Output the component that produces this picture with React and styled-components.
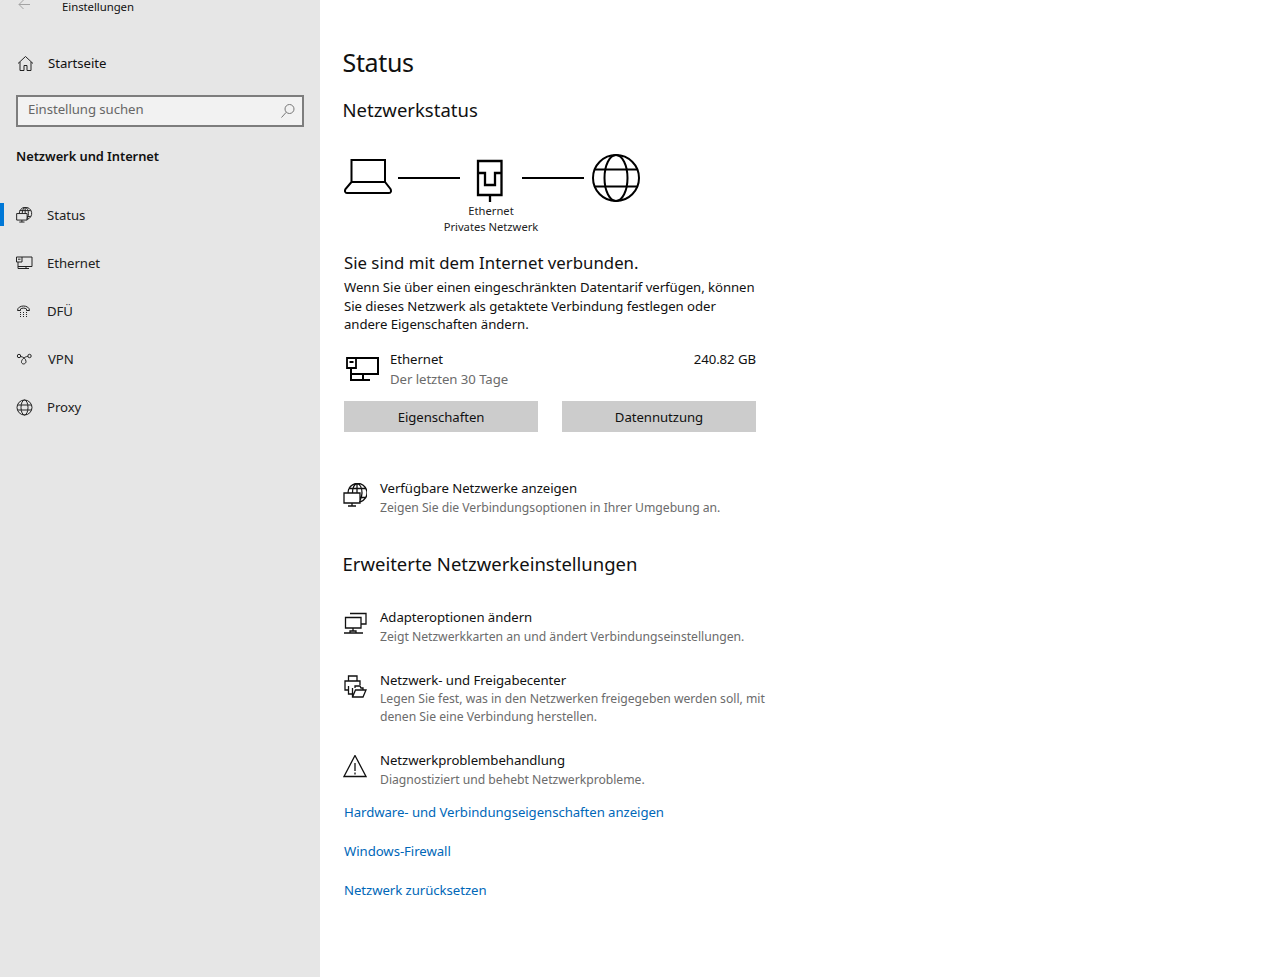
import React from "react";
import styled, { createGlobalStyle } from "styled-components";

const Global = createGlobalStyle`
  html, body { margin: 0; padding: 0; background: #fff; }
  body { font-family: "Noto Sans", "Open Sans", "Liberation Sans", sans-serif; color: #000; font-size: 13.2px; letter-spacing: -0.06px; }
  * { box-sizing: border-box; }
`;

const Page = styled.div`
  display: flex;
  width: 1288px;
  height: 977px;
  overflow: hidden;
`;
const Sidebar = styled.aside`
  width: 320px;
  flex: none;
  background: #e6e6e6;
  display: flex;
  flex-direction: column;
`;
const TitleBar = styled.div`
  height: 13px;
  display: flex;
  align-items: center;
  padding-left: 18px;
  font-size: 11.4px;
  line-height: 13px;
  color: #111;
  svg { margin-right: 32px; margin-top: -5px; }
`;
const HomeRow = styled.div`
  margin-top: 38px;
  height: 24px;
  display: flex;
  align-items: center;
  padding-left: 17px;
  gap: 14px;
  color: #111;
`;
const SearchBox = styled.div`
  margin: 20px 16px 0;
  height: 32px;
  border: 2px solid #7d7d7d;
  background: #f2f2f2;
  display: flex;
  align-items: center;
  justify-content: space-between;
  padding: 0 6px 4px 10px;
  color: #666;
  svg { margin-top: 4px; }
`;
const SectionTitle = styled.div`
  margin: 18px 0 0 16px;
  height: 22px;
  line-height: 22px;
  font-size: 12.9px;
  font-weight: 600;
  color: #111;
`;
const Nav = styled.nav`
  margin-top: 24px;
  display: flex;
  flex-direction: column;
`;
const NavItem = styled.div`
  position: relative;
  height: 48px;
  display: flex;
  align-items: center;
  padding-left: 16px;
  gap: 14px;
  color: #222;
  &::before {
    content: "";
    display: ${(p) => (p.$active ? "block" : "none")};
    position: absolute;
    left: 0;
    top: 12px;
    width: 4px;
    height: 23px;
    background: #0078d7;
  }
`;
const NavIcon = styled.svg`
  width: 17px;
  height: 17px;
  flex: none;
  fill: none;
  stroke: #222;
  stroke-width: 1;
`;
const StatusIcon = styled(NavIcon)`
  stroke-width: 1.5;
`;
const Main = styled.main`
  flex: 1;
  padding: 0 0 0 23px;
  display: flex;
  flex-direction: column;
  align-items: flex-start;
`;
const PageTitle = styled.h1`
  margin: 43px 0 0 -0.5px;
  height: 38px;
  line-height: 38px;
  font-size: 25px;
  letter-spacing: -0.35px;
  font-weight: 400;
  color: #111;
`;
const H2 = styled.h2`
  margin: ${(p) => p.$top}px 0 0 -0.5px;
  height: 28px;
  line-height: 28px;
  font-size: 18.5px;
  letter-spacing: 0;
  font-weight: 400;
  color: #111;
`;
const Diagram = styled.div`
  margin: 29px 0 0 1px;
  width: 298px;
  display: flex;
  flex-direction: column;
`;
const DiagramArt = styled.svg`
  width: 298px;
  height: 50px;
  display: block;
  fill: none;
  stroke: #000;
  stroke-width: 2;
`;
const DiagramCaption = styled.div`
  margin-left: 95px;
  width: 104px;
  text-align: center;
  font-size: 11.2px;
  letter-spacing: 0;
  line-height: 16px;
  color: #222;
`;
const Content = styled.div`
  margin-left: 1px;
  width: 424px;
`;
const Connected = styled.div`
  margin-top: 16px;
  font-size: 16.8px;
  letter-spacing: 0;
  line-height: 24px;
  color: #111;
`;
const Para = styled.p`
  margin: 3px 0 0;
  line-height: 18.5px;
  color: #111;
  width: 414px;
`;
const NetRow = styled.div`
  margin-top: 15px;
  display: flex;
  width: 412px;
  align-items: flex-start;
`;
const NetIcon = styled.svg`
  width: 35px;
  height: 30px;
  flex: none;
  margin-top: 2px;
  fill: none;
  stroke: #000;
  stroke-width: 2;
`;
const NetText = styled.div`
  margin-left: 11px;
  flex: ${(p) => (p.$fixed ? "none" : "1")};
  line-height: 20px;
  color: #111;
`;
const Muted = styled.div`
  color: #6b6b6b;
`;
const Buttons = styled.div`
  margin-top: 12px;
  display: flex;
  gap: 24px;
`;
const Button = styled.div`
  width: 194px;
  height: 31px;
  padding-top: 1px;
  background: #cccccc;
  display: flex;
  align-items: center;
  justify-content: center;
  color: #111;
`;
const LinkRow = styled.div`
  margin-top: ${(p) => p.$top}px;
  display: flex;
  align-items: flex-start;
  gap: 13px;
  width: 430px;
`;
const RowIcon = styled.svg`
  width: 24px;
  height: 26px;
  flex: none;
  fill: none;
  stroke: #111;
  stroke-width: 1.3;
  margin-top: 4px;
`;
const RowText = styled.div`
  line-height: 18px;
  color: #111;
`;
const Sub = styled.div`
  margin-top: ${(p) => p.$gap ?? 2}px;
  font-size: 12.2px;
  letter-spacing: -0.02px;
  line-height: 18px;
  color: #6b6b6b;
`;
const Blue = styled.a`
  display: block;
  margin: ${(p) => p.$top}px 0 0 1px;
  line-height: 20px;
  color: #0067b8;
`;

const monitorGlobe = (
  <path d="M5 10A9.500 9.500 0 1 1 17 19M9.500 10C9.500 4 12 1 14 .5C17 1 19 5 19 10C19 14 17.500 17 16.500 19M5.500 5.500H22.500M17 14.500H22.500M14 .5V10M1 10H17V20H1ZM9 20V23M5 23H13" />
);

export default function App() {
  return (
    <Page>
      <Global />
      <Sidebar>
        <TitleBar>
          <svg width="12" height="11" viewBox="0 0 12 11" fill="none" stroke="#a3a3a3" strokeWidth="1">
            <path d="M12 5.500H1M5.500 1L1 5.500L5.500 10" />
          </svg>
          Einstellungen
        </TitleBar>
        <HomeRow>
          <NavIcon viewBox="0 0 17 17">
            <path d="M1 8.500L8.500 1.500L16 8.500M3 7v8.500h4v-5h3v5h4V7" />
          </NavIcon>
          Startseite
        </HomeRow>
        <SearchBox>
          Einstellung suchen
          <svg width="16" height="16" viewBox="0 0 16 16" fill="none" stroke="#777" strokeWidth="1">
            <circle cx="9.500" cy="6" r="4.500" />
            <path d="M6.200 9.300L1.500 14.500" />
          </svg>
        </SearchBox>
        <SectionTitle>Netzwerk und Internet</SectionTitle>
        <Nav>
          <NavItem $active>
            <StatusIcon viewBox="0 0 26 26">{monitorGlobe}</StatusIcon>
            Status
          </NavItem>
          <NavItem>
            <NavIcon viewBox="0 0 17 17">
              <path d="M6 2H16V11.500H2M7 13.500H13M10 11.500V13.500M2 7V13.500H7" />
              <path d="M.5 2H6V7H.5ZM2 4.200H4.500" />
            </NavIcon>
            Ethernet
          </NavItem>
          <NavItem>
            <NavIcon viewBox="0 0 17 17">
              <path d="M1.500 7.500C1.500 1.500 13.500 1.500 13.500 7.500H10.500V6C9 4.800 6 4.800 4.500 6V7.500Z" />
              <path d="M4 9.500h1M7 9.500h1M10 9.500h1M4 11.500h1M7 11.500h1M10 11.500h1M4 13.500h1M7 13.500h1M10 13.500h1" />
            </NavIcon>
            DFÜ
          </NavItem>
          <NavItem>
            <NavIcon viewBox="0 0 17 17" style={{ marginRight: 1 }}>
              <circle cx="3" cy="5" r="1.700" />
              <circle cx="13.500" cy="5" r="1.700" />
              <path d="M4.700 5.500C7.500 6 10 8 10 10.500C10 13 6.500 14 5.500 11.500C5 9 8.500 5.500 11.800 5.500" />
            </NavIcon>
            VPN
          </NavItem>
          <NavItem>
            <NavIcon viewBox="0 0 17 17">
              <circle cx="8.500" cy="8.500" r="7.500" />
              <ellipse cx="8.500" cy="8.500" rx="3.500" ry="7.500" />
              <path d="M1.500 6h14M1.500 11h14" />
            </NavIcon>
            Proxy
          </NavItem>
        </Nav>
      </Sidebar>
      <Main>
        <PageTitle>Status</PageTitle>
        <H2 $top={15}>Netzwerkstatus</H2>
        <Diagram>
          <DiagramArt viewBox="0 0 298 50">
            <path d="M7.500 29V7H41V29M7.500 29L1.500 36C.5 38 1 40 3 40H45C47 40 47.500 38 46.500 36L41 29Z" />
            <path d="M54 25h62" />
            <path d="M134 8H157.500V42H134ZM146 42v7M134 20H141V32H151V20H157.500" strokeWidth="2.300" />
            <path d="M178 25h62" />
            <circle cx="272" cy="25" r="23" />
            <ellipse cx="272" cy="25" rx="11.500" ry="23" />
            <path d="M250 16.500h44M250 33.500h44" />
          </DiagramArt>
          <DiagramCaption>
            Ethernet
            <br />
            Privates Netzwerk
          </DiagramCaption>
        </Diagram>
        <Content>
          <Connected>Sie sind mit dem Internet verbunden.</Connected>
          <Para>
            Wenn Sie über einen eingeschränkten Datentarif verfügen, können
            Sie dieses Netzwerk als getaktete Verbindung festlegen oder
            andere Eigenschaften ändern.
          </Para>
          <NetRow>
            <NetIcon viewBox="0 0 35 30">
              <path d="M12 7H34V23H7M11 29H26M19 23V29M7 17V29H11" />
              <path d="M3 7H12V17H3ZM5.500 11H9.500" strokeWidth="1.800" />
            </NetIcon>
            <NetText>
              Ethernet
              <Muted>Der letzten 30 Tage</Muted>
            </NetText>
            <NetText $fixed>240.82 GB</NetText>
          </NetRow>
          <Buttons>
            <Button>Eigenschaften</Button>
            <Button>Datennutzung</Button>
          </Buttons>
        </Content>
        <LinkRow $top={47}>
          <RowIcon viewBox="0 0 24 26">{monitorGlobe}</RowIcon>
          <RowText>
            Verfügbare Netzwerke anzeigen
            <Sub>Zeigen Sie die Verbindungsoptionen in Ihrer Umgebung an.</Sub>
          </RowText>
        </LinkRow>
        <H2 $top={33}>Erweiterte Netzwerkeinstellungen</H2>
        <LinkRow $top={30}>
          <RowIcon viewBox="0 0 24 26">
            <path d="M7 1.500H23V12H18M2.500 5.500H18V16H2.500ZM10 16V19M1 21H20M7 19H13V21H7Z" />
          </RowIcon>
          <RowText>
            Adapteroptionen ändern
            <Sub>Zeigt Netzwerkkarten an und ändert Verbindungseinstellungen.</Sub>
          </RowText>
        </LinkRow>
        <LinkRow $top={25}>
          <RowIcon viewBox="0 1 24 26">
            <path d="M5.500 7V2H14v5M5.500 16H2V7h15v4M5.500 12v8h4" />
            <path d="M9.500 14v9H20l3-7H12.500L9.500 23M12 14v-2h5l1 2h2v2" />
          </RowIcon>
          <RowText>
            Netzwerk- und Freigabecenter
            <Sub $gap={1}>
              Legen Sie fest, was in den Netzwerken freigegeben werden soll, mit
              <br />
              denen Sie eine Verbindung herstellen.
            </Sub>
          </RowText>
        </LinkRow>
        <LinkRow $top={25}>
          <RowIcon viewBox="0 0 24 26">
            <path d="M12 .5L23 21.500H1ZM12 8V16M12 17.500V19.500" />
          </RowIcon>
          <RowText>
            Netzwerkproblembehandlung
            <Sub>Diagnostiziert und behebt Netzwerkprobleme.</Sub>
          </RowText>
        </LinkRow>
        <Blue $top={13}>Hardware- und Verbindungseigenschaften anzeigen</Blue>
        <Blue $top={19}>Windows-Firewall</Blue>
        <Blue $top={19}>Netzwerk zurücksetzen</Blue>
      </Main>
    </Page>
  );
}
